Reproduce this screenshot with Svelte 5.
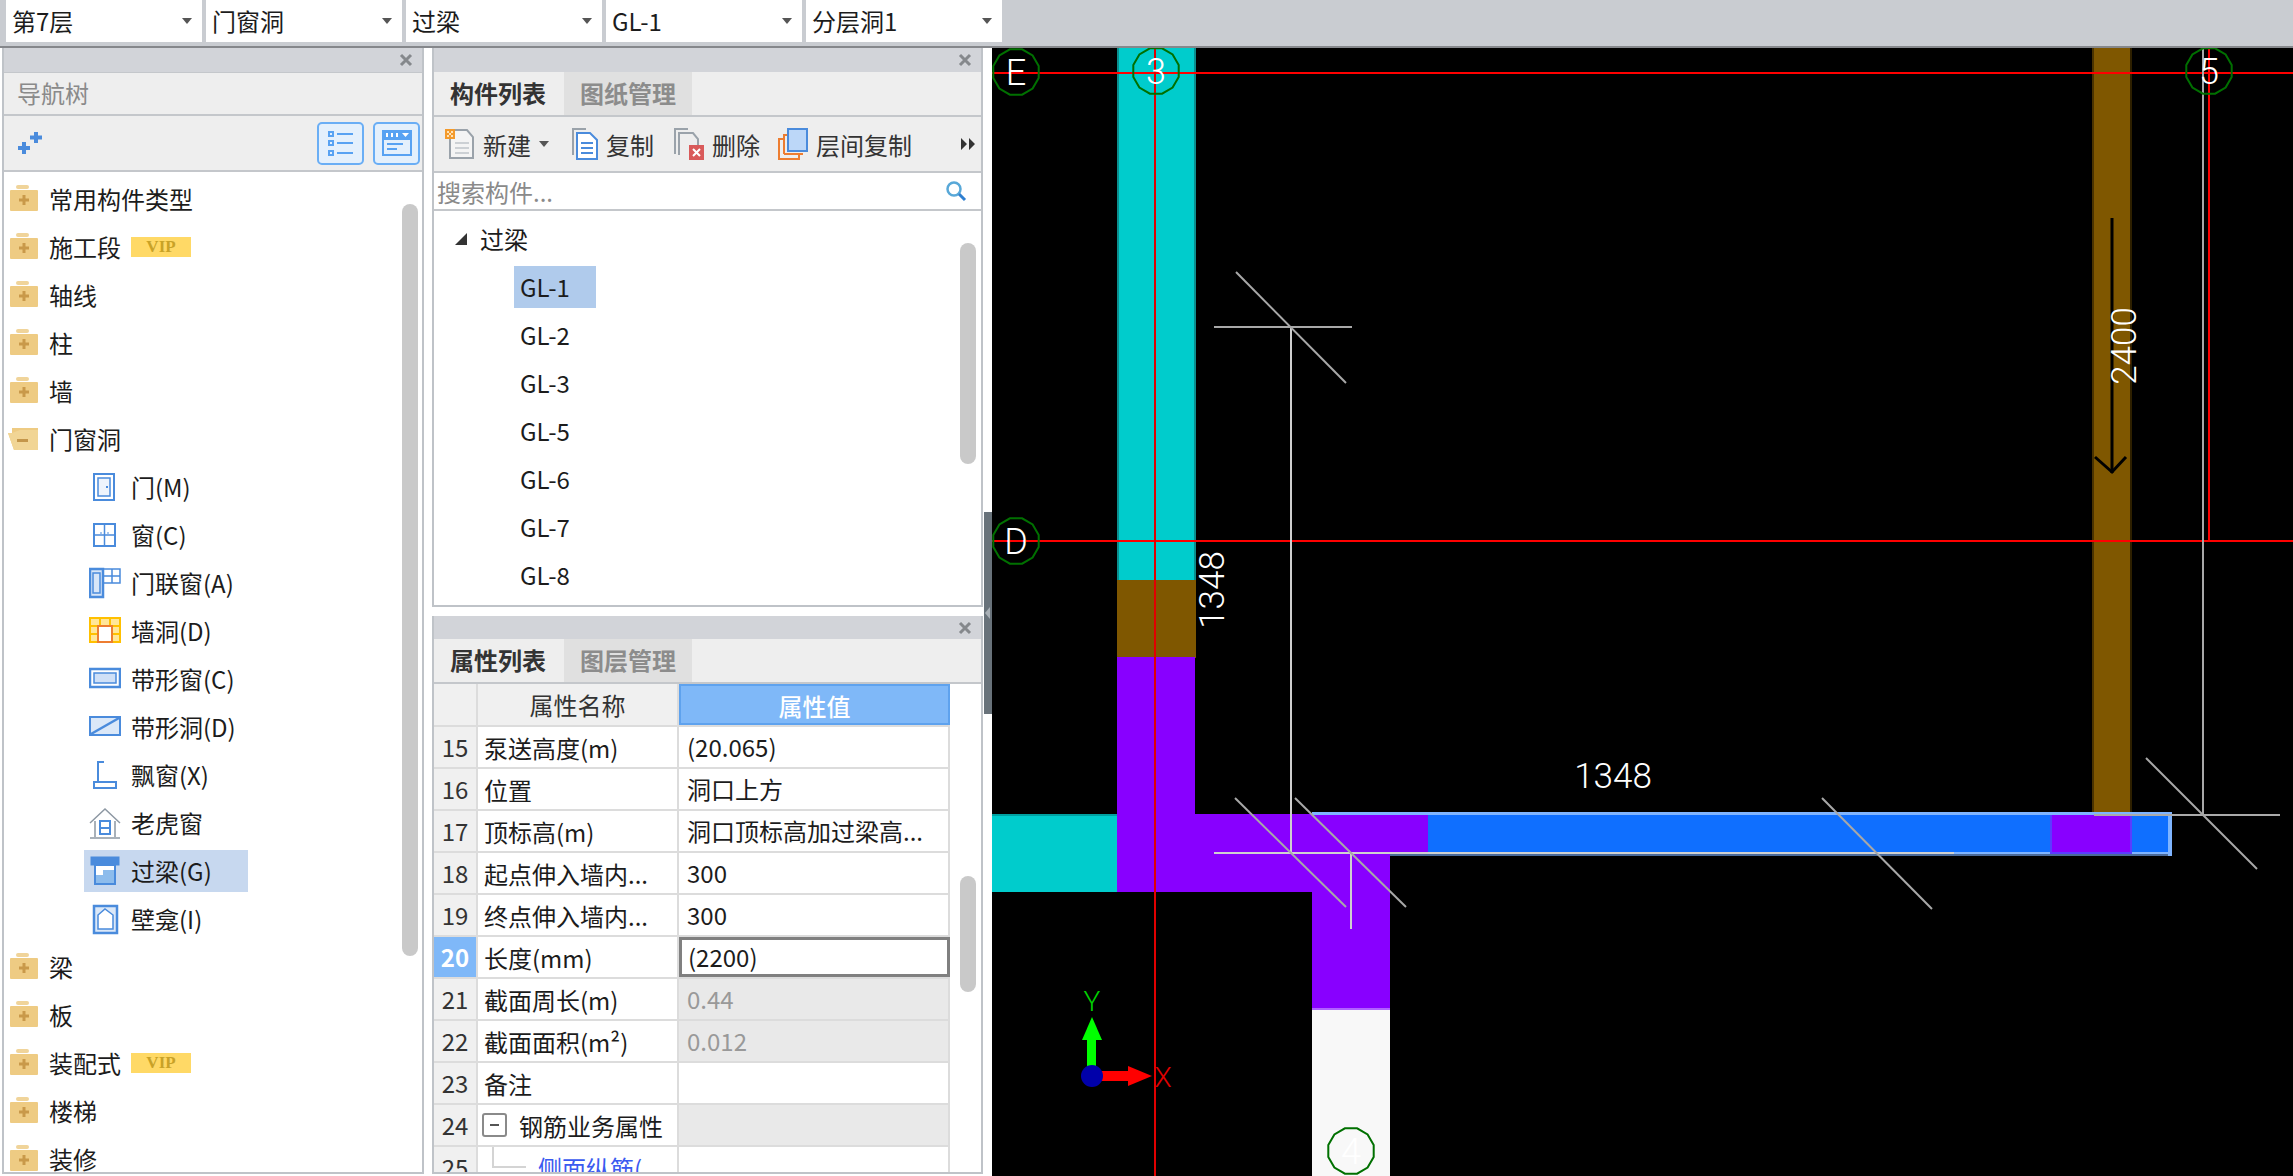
<script>
  const selects = ['第7层', '门窗洞', '过梁', 'GL-1', '分层洞1'];

  const navTree = [
    { label: '常用构件类型' },
    { label: '施工段', vip: true },
    { label: '轴线' },
    { label: '柱' },
    { label: '墙' },
    { label: '门窗洞', open: true },
    { label: '门(M)', icon: 'door' },
    { label: '窗(C)', icon: 'window' },
    { label: '门联窗(A)', icon: 'doorwin' },
    { label: '墙洞(D)', icon: 'hole' },
    { label: '带形窗(C)', icon: 'strip' },
    { label: '带形洞(D)', icon: 'striphole' },
    { label: '飘窗(X)', icon: 'bay' },
    { label: '老虎窗', icon: 'dormer' },
    { label: '过梁(G)', icon: 'lintel', active: true },
    { label: '壁龛(I)', icon: 'niche' },
    { label: '梁' },
    { label: '板' },
    { label: '装配式', vip: true },
    { label: '楼梯' },
    { label: '装修' }
  ];

  const parts = ['GL-2', 'GL-3', 'GL-5', 'GL-6', 'GL-7', 'GL-8'];

  const props = [
    { n: 15, name: '泵送高度(m)', value: '(20.065)' },
    { n: 16, name: '位置', value: '洞口上方' },
    { n: 17, name: '顶标高(m)', value: '洞口顶标高加过梁高...' },
    { n: 18, name: '起点伸入墙内...', value: '300' },
    { n: 19, name: '终点伸入墙内...', value: '300' },
    { n: 20, name: '长度(mm)', value: '(2200)', current: true },
    { n: 21, name: '截面周长(m)', value: '0.44', locked: true },
    { n: 22, name: '截面面积(m²)', value: '0.012', locked: true },
    { n: 23, name: '备注', value: '' }
  ];

  // grid bubbles on the drawing are slightly faceted circles
  function facets(cx, cy, r = 23.5, sides = 12) {
    const pts = [];
    for (let i = 0; i < sides; i++) {
      const a = (Math.PI * 2 * (i + 0.5)) / sides;
      pts.push(`${(cx + r * Math.cos(a)).toFixed(1)},${(cy + r * Math.sin(a)).toFixed(1)}`);
    }
    return pts.join(' ');
  }

  const bubbles = [
    { t: 'E', x: 1016, y: 72 },
    { t: '3', x: 1156, y: 71 },
    { t: 'D', x: 1016, y: 541 },
    { t: '5', x: 2209, y: 71 },
    { t: '4', x: 1351, y: 1151 }
  ];

  const slashes = [
    [1236, 272, 1346, 383],
    [1235, 798, 1346, 907],
    [1295, 798, 1406, 907],
    [1822, 798, 1932, 909],
    [2146, 758, 2257, 869]
  ];
</script>

{#snippet closeX()}
  <svg class="close" width="14" height="14" viewBox="0 0 14 14"><path d="M2 2l10 10M12 2L2 12" stroke="#85888c" stroke-width="3" /></svg>
{/snippet}

{#snippet folder(open)}
  <svg class="folder" width="32" height="28" viewBox="0 0 32 28">
    {#if open}
      <path d="M4 3h26v22H6L0 8h4z" fill="#eecb83" />
      <path d="M4 8h-4l6 17h24V5H12z" fill="#f1d595" />
      <rect x="9" y="14" width="11" height="3" fill="#c4964a" />
    {:else}
      <rect x="8" y="0" width="13" height="4" rx="2" fill="#f0d49a" />
      <rect x="2" y="5" width="28" height="21" rx="1" fill="#eecb83" />
      <path d="M16 10v10M11 15h10" stroke="#c9994a" stroke-width="3" />
    {/if}
  </svg>
{/snippet}

{#snippet itemIcon(name)}
  <svg class="item-icon" width="32" height="32" viewBox="0 0 32 32" fill="none" stroke="#4a8bdc" stroke-width="2">
    {#if name === 'door'}
      <rect x="5" y="3" width="20" height="26" />
      <rect x="9" y="7" width="12" height="18" fill="#eef4fc" stroke-width="1.5" />
      <path d="M18 15v2" />
    {:else if name === 'window'}
      <rect x="5" y="5" width="21" height="22" />
      <path d="M15.5 5v22M5 16h21" stroke-width="1.5" />
      <path d="M12 13v2M19 13v2" stroke-width="1" />
    {:else if name === 'doorwin'}
      <rect x="1" y="2" width="13" height="28" fill="#d8e6f8" stroke-width="2.5" />
      <rect x="4" y="6" width="7" height="20" stroke-width="1.5" />
      <path d="M14 2h17v14H14M23 2v14M14 9h17" stroke-width="1.5" />
    {:else if name === 'hole'}
      <rect x="1" y="3" width="30" height="24" fill="#ffe699" stroke="#ffc000" />
      <path d="M1 11h30M11 3v8M21 3v8M1 19h8M23 19h8" stroke="#ffc000" />
      <rect x="9" y="11" width="14" height="16" fill="#fff" stroke="#ed7d31" />
    {:else if name === 'strip'}
      <rect x="1" y="6" width="30" height="18" stroke-width="2.5" />
      <rect x="5" y="10" width="22" height="10" fill="#cfe0f7" stroke-width="1.5" />
    {:else if name === 'striphole'}
      <rect x="1" y="6" width="30" height="18" fill="#dbe8f8" stroke-width="2" />
      <path d="M2 23L30 7" stroke-width="2.5" />
    {:else if name === 'bay'}
      <path d="M15 3H9v20M5 23h22v6H5z" stroke-width="2" />
    {:else if name === 'dormer'}
      <path d="M1 16L16 2l15 14" stroke="#8d98a3" stroke-width="1.5" />
      <path d="M6 14v16M26 14v16M1 31h30" stroke="#8d98a3" stroke-width="1.5" />
      <rect x="11" y="14" width="10" height="13" stroke-width="2" />
      <path d="M11 21h10" stroke-width="2" />
    {:else if name === 'lintel'}
      <rect x="2" y="2" width="28" height="8" fill="#4a8bdc" stroke-width="1" />
      <rect x="6" y="10" width="20" height="19" fill="#fff" />
      <path d="M7 28v-8h7v-5h11v13z" fill="#8dbcec" stroke="none" />
    {:else if name === 'niche'}
      <rect x="5" y="3" width="23" height="27" fill="#dbe8f8" stroke-width="2.5" />
      <path d="M9 26V12l7-6 8 6v14z" fill="#fff" stroke-width="1.5" />
    {/if}
  </svg>
{/snippet}

<div class="app">
  <header class="topbar">
    {#each selects as s}
      <div class="select">{s}<i class="caret"></i></div>
    {/each}
  </header>

  <div class="main">
    <section class="panel nav">
      <div class="titlebar">{@render closeX()}</div>
      <div class="nav-head">导航树</div>
      <div class="nav-tools">
        <svg width="26" height="24" viewBox="0 0 26 24"><path d="M6 11v12M0 17h12" stroke="#4a8bdc" stroke-width="4" /><path d="M18 1v11M12 6.500h12" stroke="#4a8bdc" stroke-width="4" /></svg>
        <span class="spacer"></span>
        <button class="view-btn" aria-label="list">
          <svg width="28" height="28" viewBox="0 0 28 28" fill="none" stroke="#58a2f2" stroke-width="2">
            <rect x="2" y="3" width="4" height="4" /><rect x="2" y="12" width="4" height="4" /><rect x="2" y="22" width="4" height="4" />
            <path d="M10 5h16M10 14h16M10 24h16" />
          </svg>
        </button>
        <button class="view-btn" aria-label="window">
          <svg width="32" height="28" viewBox="0 0 32 28">
            <rect x="1" y="1" width="30" height="26" fill="#58a2f2" />
            <rect x="3" y="11" width="26" height="14" fill="#e4f0fc" />
            <path d="M6 15h16M6 20h10" stroke="#58a2f2" stroke-width="2" />
            <path d="M6 4v4M11 4v4M16 4v4" stroke="#fff" stroke-width="2" />
            <path d="M21 4h7l-3.500 4z" fill="#fff" />
          </svg>
        </button>
      </div>
      <div class="nav-tree">
        {#each navTree as item}
          {#if item.icon}
            <div class="child" class:active={item.active}>
              {@render itemIcon(item.icon)}
              <span>{item.label}</span>
            </div>
          {:else}
            <div class="node">
              {@render folder(item.open)}
              <span>{item.label}</span>
              {#if item.vip}<b class="vip">VIP</b>{/if}
            </div>
          {/if}
        {/each}
        <i class="thumb nav-thumb"></i>
      </div>
    </section>

    <div class="middle">
      <section class="panel parts">
        <div class="titlebar tall">{@render closeX()}</div>
        <div class="tabs">
          <div class="tab on">构件列表</div>
          <div class="tab">图纸管理</div>
        </div>
        <div class="toolbar">
          <div class="tool new">
            <svg width="30" height="32" viewBox="0 0 30 32" fill="none">
              <path d="M5 2h17l6 7v21H5z" fill="#f4f4f4" stroke="#9aa2aa" stroke-width="2" />
              <path d="M10 15h14M10 20h14M10 25h14" stroke="#ccd0d4" stroke-width="2" />
              <rect x="0" y="1" width="10" height="10" fill="#f39a2c" />
              <path d="M2 3h2v2H2zM6 3h2v2H6zM4 5h2v2H4zM2 7h2v2H2zM6 7h2v2H6z" fill="#ffe2b5" />
            </svg>
            <span>新建</span>
            <i class="caret small"></i>
          </div>
          <div class="tool">
            <svg width="26" height="32" viewBox="0 0 26 32" fill="none">
              <path d="M1 27V1h13" stroke="#9aa2aa" stroke-width="2" />
              <path d="M5 5h13l7 7v19H5z" fill="#fff" stroke="#4a8bdc" stroke-width="2" />
              <path d="M9 15h12M9 20h12M9 25h12" stroke="#4a8bdc" stroke-width="2" />
            </svg>
            <span>复制</span>
          </div>
          <div class="tool del">
            <svg width="30" height="32" viewBox="0 0 30 32" fill="none">
              <path d="M1 26V1h13" stroke="#9aa2aa" stroke-width="2" />
              <path d="M5 27V5h14l5 6v7" stroke="#9aa2aa" stroke-width="2" />
              <rect x="15" y="17" width="15" height="15" fill="#d95a5a" />
              <path d="M19 21l7 7M26 21l-7 7" stroke="#fff" stroke-width="2" />
            </svg>
            <span>删除</span>
          </div>
          <div class="tool">
            <svg width="30" height="32" viewBox="0 0 30 32" fill="none">
              <path d="M1 32V11h6M1 31h20v-4" stroke="#ed7d31" stroke-width="2" />
              <path d="M6 26V7h3M6 26h19" stroke="#ed7d31" stroke-width="2" />
              <rect x="10" y="1" width="19" height="22" fill="#bcd7f8" stroke="#4a8bdc" stroke-width="2" />
            </svg>
            <span>层间复制</span>
          </div>
          <svg class="more" width="14" height="12" viewBox="0 0 14 12"><path d="M0 0l6 6-6 6zM8 0l6 6-6 6z" fill="#333" /></svg>
        </div>
        <div class="search">
          <span>搜索构件...</span>
          <svg width="22" height="22" viewBox="0 0 22 22" fill="none">
            <circle cx="9" cy="9" r="6.500" stroke="#58a8d8" stroke-width="2.500" />
            <path d="M14 14l6 6" stroke="#2f7fd0" stroke-width="3" />
          </svg>
        </div>
        <div class="part-tree">
          <div class="part-root"><svg width="12" height="12" viewBox="0 0 12 12"><path d="M12 0v12H0z" fill="#333" /></svg><span>过梁</span></div>
          <div class="part"><span class="hit">GL-1</span></div>
          {#each parts as p}
            <div class="part"><span>{p}</span></div>
          {/each}
          <i class="thumb part-thumb"></i>
        </div>
      </section>

      <section class="panel attrs">
        <div class="titlebar low">{@render closeX()}</div>
        <div class="tabs">
          <div class="tab on">属性列表</div>
          <div class="tab">图层管理</div>
        </div>
        <div class="table">
          <div class="row head">
            <div class="idx"></div>
            <div class="name">属性名称</div>
            <div class="val">属性值</div>
          </div>
          {#each props as p}
            <div class="row" class:current={p.current} class:locked={p.locked}>
              <div class="idx">{p.n}</div>
              <div class="name">{p.name}</div>
              <div class="val">{p.value}</div>
            </div>
          {/each}
          <div class="row locked group">
            <div class="idx">24</div>
            <div class="name"><i class="minus"></i>钢筋业务属性</div>
            <div class="val"></div>
          </div>
          <div class="row sub">
            <div class="idx">25</div>
            <div class="name"><i class="branch"></i><span class="link">侧面纵筋(</span></div>
            <div class="val"></div>
          </div>
          <i class="thumb attr-thumb"></i>
        </div>
      </section>
    </div>

    <div class="splitter">
      <i class="grip"><svg width="8" height="14" viewBox="0 0 8 14"><path d="M6 1L1 7l5 6z" fill="#a9b0b6" /></svg></i>
    </div>

    <svg class="canvas" viewBox="992 48 1301 1128" width="1301" height="1128">
      <g shape-rendering="crispEdges">
        <rect x="1117" y="48" width="79" height="533" fill="#0a8f8f" />
        <rect x="1119" y="48" width="75" height="533" fill="#00cccc" />
        <rect x="1117" y="580" width="79" height="78" fill="#7f5700" />
        <rect x="992" y="814" width="125" height="78" fill="#00cccc" />
        <rect x="992" y="814" width="125" height="2" fill="#00a0a0" />
        <rect x="1312" y="1010" width="78" height="166" fill="#f8f8f8" />
        <rect x="1117" y="657" width="78" height="235" fill="#8800ff" />
        <rect x="1117" y="814" width="273" height="78" fill="#8800ff" />
        <rect x="1312" y="814" width="78" height="196" fill="#8800ff" />
        <rect x="1312" y="1008" width="78" height="2" fill="#b060ff" />

        <rect x="1390" y="854" width="782" height="2" fill="#4a6a9a" />
        <rect x="1428" y="814" width="744" height="40" fill="#0f6fff" />
        <rect x="1117" y="814" width="311" height="40" fill="#8800ff" />
        <rect x="1312" y="812" width="860" height="3" fill="#7fb4ff" />
        <rect x="2168" y="812" width="4" height="44" fill="#7fb4ff" />
        <rect x="1428" y="852" width="744" height="2" fill="#7fb4ff" />
        <rect x="2050" y="815" width="82" height="39" fill="#5a3cff" />
        <rect x="2052" y="815" width="78" height="37" fill="#8800ff" />
        <rect x="2092" y="48" width="2" height="764" fill="#4a3300" />
        <rect x="2094" y="48" width="36" height="764" fill="#7f5700" />
        <rect x="2130" y="48" width="2" height="764" fill="#2e2000" />

        <rect x="992" y="72" width="1301" height="2" fill="#ff0000" />
        <rect x="992" y="540" width="1301" height="2" fill="#ff0000" />
        <rect x="1154" y="48" width="2" height="1128" fill="#e00000" />
        <rect x="2208" y="48" width="2" height="493" fill="#ff0000" />

        <rect x="1214" y="326" width="138" height="2" fill="#a8a8a8" />
        <rect x="1290" y="327" width="2" height="526" fill="#cfcfcf" />
        <rect x="1214" y="852" width="740" height="2" fill="#d0d0d0" />
        <rect x="1350" y="853" width="2" height="76" fill="#cfcfcf" />
        <rect x="2094" y="814" width="186" height="2" fill="#aaaaaa" />
        <rect x="2202" y="48" width="2" height="767" fill="#a8a8a8" />
      </g>

      {#each slashes as [x1, y1, x2, y2]}
        <line {x1} {y1} {x2} {y2} stroke="#a8a8a8" stroke-width="2" />
      {/each}

      {#each bubbles as b}
        <polygon points={facets(b.x, b.y)} fill="none" stroke="#007000" stroke-width="2" />
        <text class="cad bubble" x={b.x} y={b.y + 13} text-anchor="middle">{b.t}</text>
      {/each}

      <path d="M2112 218V473" stroke="#000" stroke-width="3" />
      <path d="M2095 457L2112 472L2126 457" stroke="#000" stroke-width="3" fill="none" />

      <text class="cad dim" transform="translate(2136 346) rotate(-90)" text-anchor="middle">2400</text>
      <text class="cad dim" transform="translate(1224 590) rotate(-90)" text-anchor="middle">1348</text>
      <text class="cad dim" x="1613" y="788" text-anchor="middle">1348</text>

      <rect x="1087" y="1038" width="9" height="28" fill="#00ff00" />
      <path d="M1092 1017L1102 1040H1082z" fill="#00ff00" />
      <rect x="1100" y="1071" width="30" height="10" fill="#ff0000" />
      <path d="M1128 1066L1152 1076L1128 1086z" fill="#ff0000" />
      <circle cx="1092" cy="1076" r="11" fill="#0000aa" />
      <text class="cad axis" x="1092" y="1011" fill="#00d000" text-anchor="middle">Y</text>
      <text class="cad axis" x="1163" y="1087" fill="#e00000" text-anchor="middle">X</text>
    </svg>
  </div>
</div>

<style>
  :global(body) { margin: 0; background: #fff; }

  .app {
    width: 2293px;
    height: 1176px;
    display: flex;
    flex-direction: column;
    overflow: hidden;
    font-family: "Noto Sans CJK SC", "Liberation Sans", sans-serif;
    font-size: 24px;
    color: #1c1c1c;
  }

  .topbar {
    height: 48px;
    box-sizing: border-box;
    display: flex;
    gap: 4px;
    padding: 0 0 4px 6px;
    background: #c9ccd1;
    border-bottom: 2px solid #85878b;
    flex: none;
  }
  .select {
    width: 196px;
    box-sizing: border-box;
    padding-left: 6px;
    display: flex;
    align-items: center;
    justify-content: space-between;
    background: #fff;
    line-height: 42px;
  }
  .caret {
    width: 0;
    height: 0;
    margin-right: 10px;
    border-left: 5px solid transparent;
    border-right: 5px solid transparent;
    border-top: 6px solid #555;
  }
  .caret.small { margin: 0 0 0 0; }

  .main { flex: 1; min-height: 0; display: flex; }

  .panel {
    box-sizing: border-box;
    border: 2px solid #bfc3c8;
    border-top: 0;
    display: flex;
    flex-direction: column;
    overflow: hidden;
    background: #fff;
  }
  .nav { width: 422px; margin: 0 8px 2px 2px; }

  .titlebar {
    height: 24px;
    flex: none;
    display: flex;
    align-items: center;
    justify-content: flex-end;
    padding-right: 9px;
    background: #d2d4d9;
  }
  .titlebar.low { height: 23px; }

  .nav-head {
    height: 44px;
    box-sizing: border-box;
    flex: none;
    padding-left: 13px;
    line-height: 39px;
    color: #8a8a8a;
    background: #eeeeee;
    border-top: 1px solid #c4c7cb;
    border-bottom: 2px solid #c4c7cb;
  }
  .nav-tools {
    height: 56px;
    box-sizing: border-box;
    flex: none;
    display: flex;
    align-items: center;
    gap: 9px;
    padding: 0 2px 0 14px;
    background: #eeeeee;
    border-bottom: 2px solid #c4c7cb;
  }
  .spacer { flex: 1; }
  .view-btn {
    width: 47px;
    height: 43px;
    padding: 0;
    display: flex;
    align-items: center;
    justify-content: center;
    background: #e4f0fc;
    border: 2px solid #6aaef5;
    border-radius: 5px;
  }

  .nav-tree { position: relative; flex: 1; min-height: 0; padding-top: 3px; overflow: hidden; line-height: 26px; }
  .node, .child { height: 48px; display: flex; align-items: center; white-space: nowrap; }
  .node { padding-left: 4px; gap: 9px; }
  .node span { margin-right: 1px; }
  .folder { flex: none; }
  .vip {
    width: 60px;
    height: 20px;
    text-align: center;
    font: bold 17px/20px "Liberation Serif", serif;
    color: #c9a227;
    background: #ffd966;
  }
  .child { width: 164px; margin-left: 80px; gap: 10px; padding-left: 5px; box-sizing: border-box; position: relative; z-index: 0; }
  .child.active::before {
    content: "";
    position: absolute;
    z-index: -1;
    left: 0;
    right: 0;
    top: 3px;
    bottom: 3px;
    background: #c7d8ef;
  }
  .item-icon { flex: none; }

  .thumb { position: absolute; display: block; width: 16px; background: #c9c9c9; border-radius: 8px; }
  .nav-thumb { right: 4px; top: 32px; height: 752px; }

  .middle { width: 551px; display: flex; flex-direction: column; gap: 9px; margin: 0 0 2px; flex: none; }
  .parts { height: 559px; flex: none; }
  .attrs { flex: 1; min-height: 0; }

  .tabs {
    height: 45px;
    flex: none;
    display: flex;
    gap: 2px;
    box-sizing: border-box;
    background: #eeeeee;
    border-bottom: 2px solid #c4c7cb;
  }
  .tab {
    width: 128px;
    text-align: center;
    line-height: 41px;
    font-weight: 700;
    color: #8c8c8c;
    background: #e0e0e0;
  }
  .tab.on { background: #eeeeee; color: #333; }

  .toolbar {
    height: 56px;
    box-sizing: border-box;
    flex: none;
    display: flex;
    align-items: center;
    padding-left: 11px;
    background: #eeeeee;
    border-bottom: 2px solid #c4c7cb;
    color: #333;
  }
  .tool { display: flex; align-items: center; gap: 8px; margin-right: 20px; }
  .tool.new { margin-right: 23px; }
  .tool.del { margin-right: 18px; }
  .more { margin-left: auto; margin-right: 6px; }

  .search {
    height: 38px;
    box-sizing: border-box;
    flex: none;
    display: flex;
    align-items: center;
    justify-content: space-between;
    padding: 0 14px 0 3px;
    color: #8a8a8a;
    border-bottom: 2px solid #c4c7cb;
  }

  .part-tree { position: relative; flex: 1; min-height: 0; overflow: hidden; padding-top: 4px; }
  .part-root { height: 48px; display: flex; align-items: center; gap: 13px; padding-left: 21px; }
  .part-root span { margin-top: -1px; }
  .part-root svg { margin-top: -1px; }
  .part { height: 48px; display: flex; align-items: center; padding-left: 80px; }
  .part span { width: 82px; height: 42px; box-sizing: border-box; padding-left: 6px; line-height: 41px; }
  .part .hit { background: #b0cbec; }
  .part-thumb { right: 5px; top: 32px; height: 221px; }

  .table { position: relative; flex: 1; min-height: 0; overflow: hidden; }
  .row {
    display: grid;
    grid-template-columns: 44px 201px 271px;
    width: 516px;
    height: 42px;
    box-sizing: border-box;
    border-bottom: 2px solid #dcdcdc;
    white-space: nowrap;
    line-height: 39px;
  }
  .row > div { box-sizing: border-box; overflow: hidden; border-right: 2px solid #dcdcdc; }
  .idx { background: #f0f0f0; text-align: center; color: #333; }
  .name { padding-left: 6px; display: flex; align-items: center; }
  .val { padding-left: 8px; }

  .head { height: 43px; }
  .head .name { justify-content: center; background: #f0f0f0; color: #333; padding: 0; }
  .head .val { text-align: center; padding: 0; color: #fff; background: #7fb8f8; border: 2px solid #5ea2ee; font-weight: 500; }

  .current .idx { background: #7fb8f8; color: #fff; font-weight: 700; }
  .current .val { border: 3px solid #808080; line-height: 34px; padding-left: 6px; }
  .locked .val { background: #e9e9e9; color: #999; }

  .minus {
    position: relative;
    flex: none;
    width: 25px;
    height: 24px;
    box-sizing: border-box;
    margin-right: 12px;
    border: 2px solid #8a8a8a;
    border-radius: 3px;
    background: #fff;
  }
  .minus::after { content: ""; position: absolute; left: 6px; right: 6px; top: 9px; height: 2px; background: #555; }
  .group .name { padding-left: 4px; }

  .branch { position: relative; flex: none; width: 34px; height: 2px; margin-right: 12px; margin-left: 10px; background: #d4d4d4; }
  .branch::before { content: ""; position: absolute; left: 0; bottom: 0; width: 2px; height: 22px; background: #d4d4d4; }
  .sub .name { padding-left: 4px; }
  .link { color: #3a5af0; }

  .attr-thumb { right: 5px; top: 192px; height: 116px; }

  .splitter { width: 9px; flex: none; padding-top: 464px; box-sizing: border-box; }
  .grip {
    display: flex;
    align-items: center;
    justify-content: center;
    width: 8px;
    margin-left: 1px;
    height: 202px;
    background: #68727a;
  }

  .canvas { display: block; flex: none; background: #000; }
  .cad { font-family: Roboto, "Liberation Sans", sans-serif; font-weight: 300; }
  .bubble { font-size: 36px; fill: #fff; }
  .dim { font-size: 35px; fill: #fff; }
  .axis { font-size: 28px; }
</style>
